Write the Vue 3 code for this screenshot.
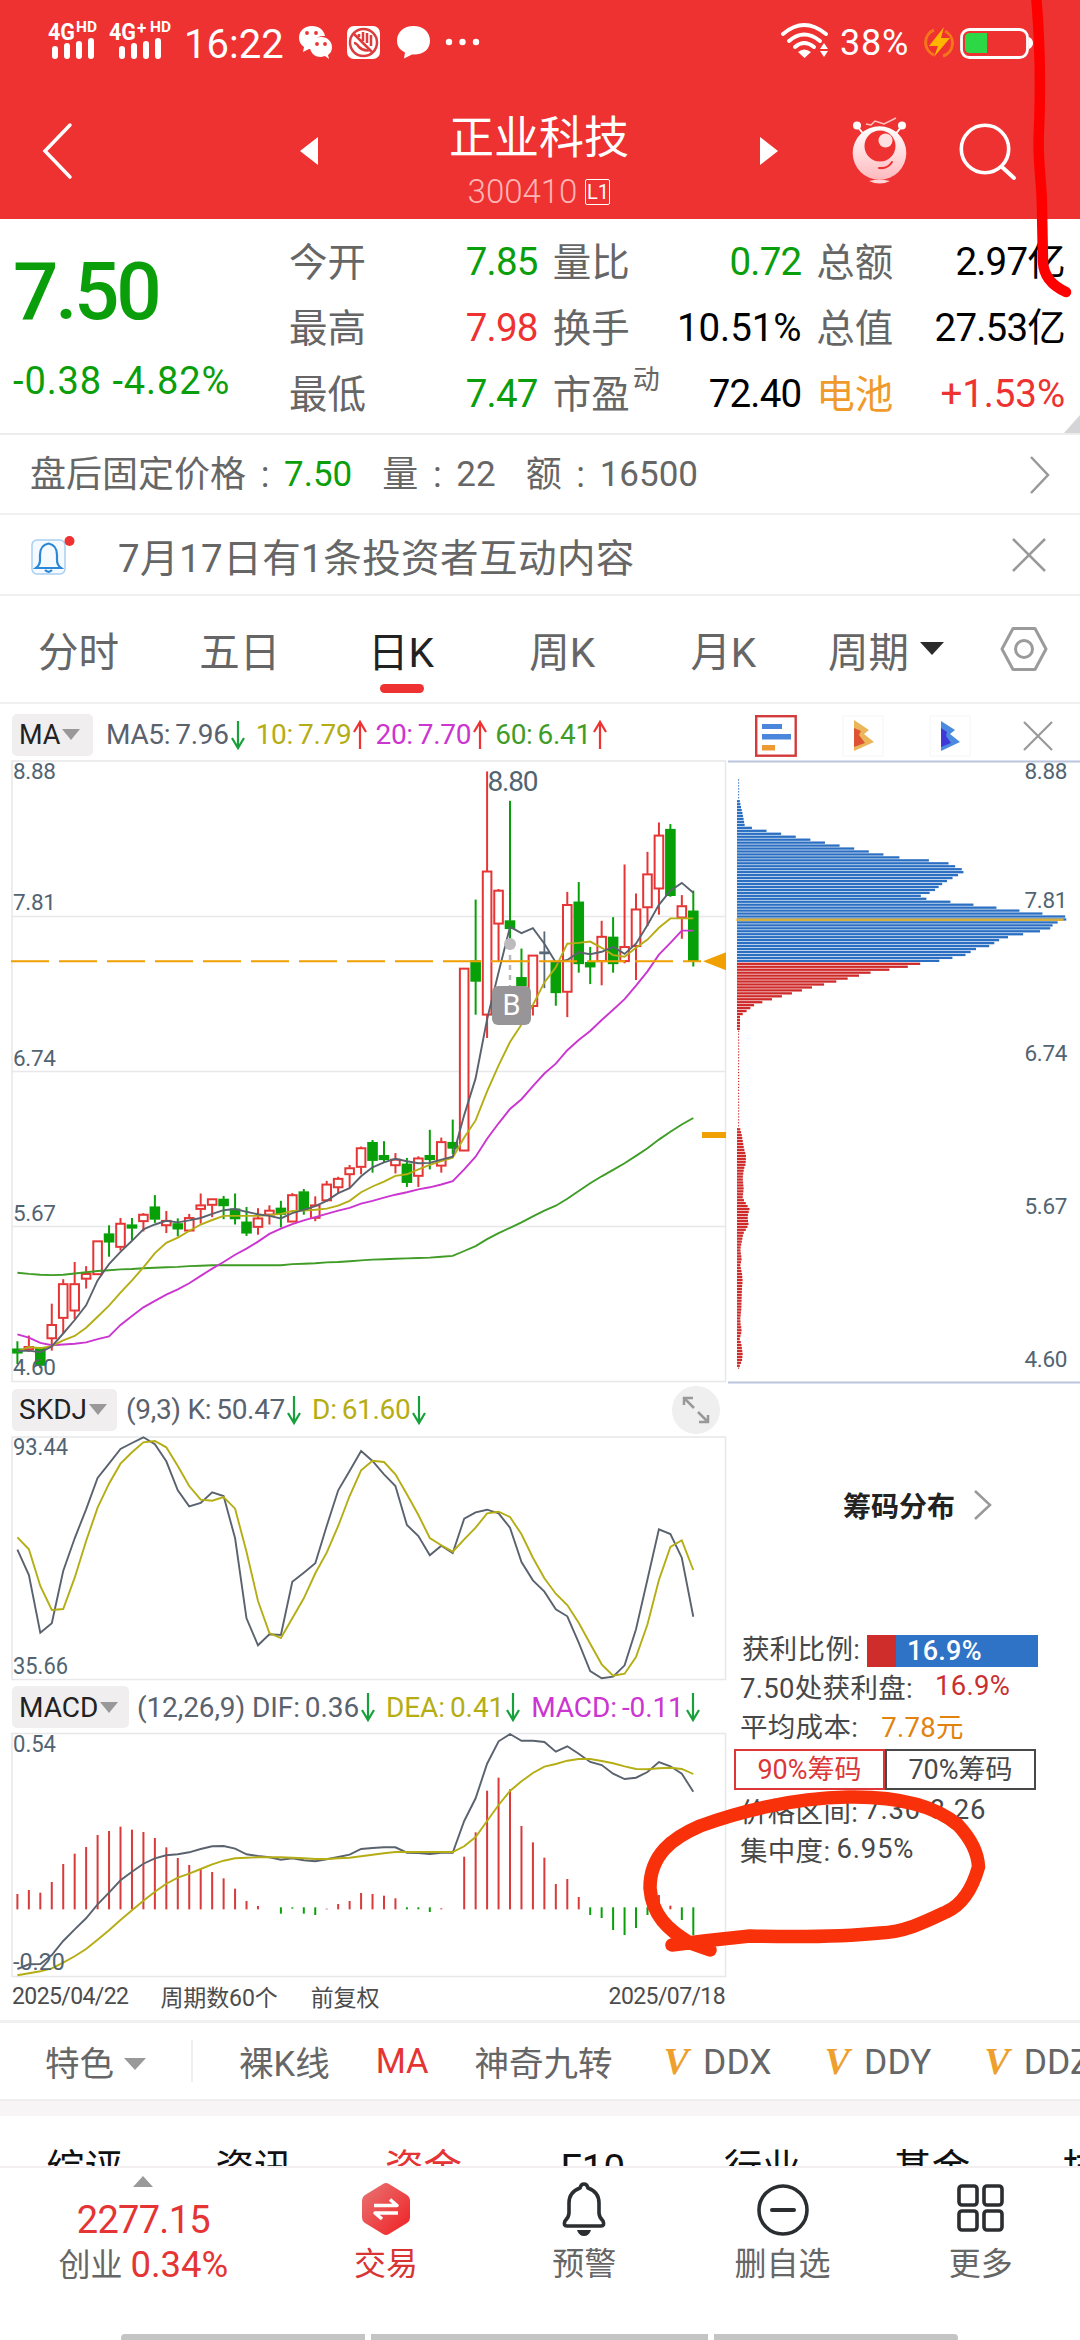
<script setup>
import { ref } from 'vue';

const quotes = ref([
  { label: '今开', value: '7.85', tone: 'down' },
  { label: '量比', value: '0.72', tone: 'down' },
  { label: '总额', value: '2.97亿', tone: 'plain' },
  { label: '最高', value: '7.98', tone: 'up' },
  { label: '换手', value: '10.51%', tone: 'plain' },
  { label: '总值', value: '27.53亿', tone: 'plain' },
  { label: '最低', value: '7.47', tone: 'down' },
  { label: '市盈', value: '72.40', tone: 'plain', sup: '动' },
  { label: '电池', value: '+1.53%', tone: 'up', sector: true }
]);

const periods = ['分时', '五日', '日K', '周K', '月K'];
const period = ref('日K');

const sections = ['综评', '资讯', '资金', 'F10', '行业', '基金', '技术'];
const section = ref('资金');

const axis = ['8.88', '7.81', '6.74', '5.67', '4.60'];

// one slot per trading day
const cx = (i) => 17.4 + i * 11.456;
const py = (v) => v / 2.45;

// [rising, high, body top, body bottom, low]
const rows = [
  [0, 1424, 1443, 1453, 1480], [1, 1410, 1437, 1445, 1450], [0, 1440, 1440, 1483, 1490],
  [1, 1332, 1383, 1418, 1447], [1, 1272, 1283, 1368, 1405], [1, 1230, 1283, 1350, 1370],
  [1, 1240, 1258, 1272, 1295], [1, 1178, 1178, 1261, 1261], [0, 1140, 1161, 1181, 1217],
  [1, 1122, 1135, 1194, 1202], [0, 1122, 1139, 1147, 1177], [1, 1110, 1113, 1131, 1155],
  [0, 1066, 1095, 1125, 1134], [1, 1105, 1128, 1141, 1159], [0, 1123, 1136, 1149, 1167],
  [1, 1112, 1121, 1154, 1156], [1, 1062, 1090, 1101, 1136], [1, 1075, 1075, 1091, 1120],
  [0, 1068, 1076, 1092, 1125], [0, 1062, 1100, 1124, 1138], [0, 1095, 1132, 1159, 1166],
  [1, 1098, 1122, 1145, 1163], [1, 1091, 1103, 1115, 1138], [0, 1080, 1098, 1113, 1145],
  [1, 1061, 1065, 1132, 1132], [0, 1051, 1058, 1103, 1114], [1, 1069, 1090, 1123, 1130],
  [1, 1031, 1039, 1080, 1082], [1, 1021, 1025, 1048, 1062], [1, 992, 999, 1016, 1048],
  [1, 947, 950, 998, 1015], [0, 931, 937, 981, 1011], [0, 934, 969, 979, 985],
  [1, 963, 978, 994, 1013], [0, 975, 990, 1035, 1046], [1, 971, 975, 1020, 1046],
  [0, 906, 969, 979, 1003], [1, 925, 935, 995, 1011], [0, 881, 937, 951, 965],
  [1, 510, 510, 958, 958], [0, 342, 492, 542, 624], [1, 28, 272, 625, 681],
  [1, 316, 319, 402, 495], [0, 100, 394, 413, 440], [0, 462, 533, 553, 560],
  [1, 478, 478, 604, 626], [2, 420, 470, 473, 559], [0, 493, 493, 570, 602],
  [1, 323, 354, 569, 630], [0, 299, 348, 499, 521], [0, 458, 496, 507, 549],
  [1, 394, 432, 494, 552], [0, 385, 434, 499, 521], [1, 256, 457, 494, 498],
  [1, 327, 365, 457, 539], [1, 225, 279, 362, 407], [1, 153, 184, 316, 379],
  [0, 157, 170, 332, 335], [1, 331, 357, 387, 438], [0, 320, 370, 492, 506]
];
const kinds = ['fall', 'rise', 'flat'];
const candles = rows.map(([k, h, t, b, l], i) => ({
  kind: kinds[k], x: cx(i), h: py(h), t: py(t), b: py(b), l: py(l)
}));

const line = (values, y) => values.map((v, i) => `${cx(i).toFixed(1)},${y(v).toFixed(1)}`).join(' ');

const ma5 = line([
  1448, 1447, 1451, 1437, 1405, 1372, 1336, 1275, 1235, 1205, 1178, 1150, 1138, 1129, 1133, 1128, 1122, 1112, 1103, 1100,
  1107, 1113, 1117, 1123, 1110, 1102, 1093, 1080, 1061, 1049, 1020, 998, 986, 977, 983, 988, 987, 979, 972, 870,
  780, 635, 520, 409, 424, 412, 450, 496, 490, 471, 476, 470, 458, 475, 450, 404, 355, 320, 301, 325
], py);
const ma10 = line([
  1449, 1438, 1441, 1436, 1422, 1411, 1391, 1364, 1337, 1305, 1275, 1243, 1208, 1183, 1170, 1154, 1138, 1127, 1117, 1117,
  1117, 1117, 1115, 1112, 1105, 1104, 1102, 1099, 1092, 1080, 1059, 1045, 1033, 1019, 1015, 1003, 992, 983, 974, 925,
  883, 812, 748, 691, 648, 600, 545, 508, 450, 448, 445, 460, 478, 482, 460, 440, 411, 388, 388, 388
], py);
const ma20 = line([
  1407, 1415, 1428, 1434, 1432, 1430, 1427, 1419, 1412, 1384, 1362, 1341, 1325, 1310, 1297, 1282, 1264, 1246, 1230, 1212,
  1197, 1180, 1161, 1148, 1137, 1128, 1120, 1112, 1104, 1097, 1087, 1080, 1072, 1065, 1059, 1052, 1047, 1040, 1032, 1003,
  972, 928, 890, 855, 831, 799, 768, 744, 711, 686, 664, 637, 612, 586, 553, 518, 477, 448, 418, 418
], py);
const ma60 = line([
  1256, 1259, 1261, 1262, 1261, 1258, 1255, 1252, 1250, 1248, 1247, 1245, 1244, 1243, 1242, 1240, 1239, 1238, 1238, 1238,
  1238, 1238, 1238, 1238, 1235, 1234, 1233, 1231, 1230, 1228, 1226, 1224, 1223, 1222, 1221, 1220, 1219, 1217, 1215, 1203,
  1191, 1174, 1159, 1146, 1133, 1118, 1104, 1092, 1075, 1056, 1037, 1020, 1004, 988, 970, 951, 930, 911, 893, 877
], py);

const third = (v) => v / 3;
const k = line([
  506, 582, 755, 727, 570, 472, 385, 291, 248, 204, 186, 169, 190, 241, 328, 376, 366, 334, 345, 472,
  712, 793, 760, 762, 602, 575, 547, 435, 328, 270, 210, 240, 280, 315, 432, 465, 523, 494, 516, 413,
  394, 386, 397, 440, 543, 598, 632, 685, 706, 785, 870, 892, 887, 853, 745, 595, 445, 459, 530, 707
], third);
const d = line([
  469, 505, 615, 687, 684, 590, 480, 380, 308, 248, 214, 184, 180, 199, 255, 315, 356, 359, 348, 383,
  512, 660, 756, 771, 712, 652, 577, 515, 435, 345, 268, 239, 243, 280, 340, 402, 471, 493, 512, 475,
  440, 397, 392, 408, 460, 530, 592, 638, 672, 725, 788, 850, 884, 878, 828, 730, 597, 498, 478, 567
], third);
const dif = line([
  864, 850, 849, 822, 780, 745, 712, 670, 635, 598, 572, 548, 532, 523, 520, 514, 504, 496, 495, 503,
  520, 525, 529, 536, 532, 538, 541, 535, 528, 521, 504, 501, 499, 499, 515, 516, 519, 515, 515, 420,
  352, 248, 181, 159, 179, 179, 183, 212, 196, 218, 243, 252, 278, 294, 290, 273, 243, 256, 278, 332
], third);
const dea = line([
  883, 877, 871, 862, 845, 826, 804, 776, 748, 717, 688, 659, 632, 608, 590, 578, 564, 550, 539, 532,
  530, 529, 529, 529, 530, 532, 534, 534, 532, 530, 526, 521, 517, 513, 513, 513, 513, 513, 513, 496,
  468, 420, 372, 330, 301, 276, 257, 249, 239, 234, 234, 240, 247, 256, 264, 265, 262, 260, 264, 279
], third);

// positive days rise from the zero line, negative days hang below it
const macd = [
  46, 58, 50, 82, 136, 167, 187, 223, 235, 248, 239, 232, 214, 186, 154, 133, 123, 112, 93, 62,
  25, 10, 0, -19, -4, -19, -23, 2, 16, 25, 49, 46, 41, 33, -6, -6, -14, 3, 0, 158,
  231, 356, 395, 360, 250, 201, 155, 76, 91, 37, -23, -32, -68, -83, -62, -23, 43, 11, -38, -84
].map((v, i) => ({
  x: cx(i) - 1, up: v > 0, y: v > 0 ? (685 - v) / 3 : 679 / 3, h: Math.abs(v) / 3
}));

// chip distribution outline: [y, bar end]
const outline = [
  [173, 117], [215, 118], [232, 122], [250, 128], [275, 134], [281, 153], [347, 590], [358, 737], [378, 797],
  [385, 780], [405, 730], [425, 698], [432, 667], [438, 651], [442, 700], [475, 1044], [482, 1116], [489, 1090],
  [496, 1062], [510, 1047], [516, 995], [529, 906], [546, 869], [553, 827], [566, 797], [580, 714], [586, 660],
  [593, 621], [606, 510], [627, 402], [638, 340], [664, 222], [677, 165], [697, 131], [703, 120], [730, 120],
  [740, 117], [950, 117], [957, 121], [968, 125], [1000, 132], [1015, 138], [1035, 137], [1045, 132], [1065, 128],
  [1090, 131], [1110, 128], [1117, 133], [1137, 150], [1145, 144], [1158, 143], [1170, 146], [1180, 139],
  [1190, 130], [1210, 125], [1225, 121], [1247, 125], [1262, 121], [1280, 126], [1297, 128], [1310, 126],
  [1360, 124], [1380, 121], [1395, 122], [1405, 125], [1418, 123], [1424, 118], [1437, 124], [1460, 128],
  [1475, 126], [1485, 120], [1497, 116]
];
const chips = [];
for (let y = 175.5; y < 1497; y += 6.62) {
  const n = outline.findIndex((p) => p[0] >= y);
  const [y0, x0] = outline[n - 1];
  const [y1, x1] = outline[n];
  const end = x0 + ((x1 - x0) * (y - y0)) / (y1 - y0);
  const thin = end < 119;
  chips.push({
    x: thin ? 10 : 9,
    y: (y - 132) / 2.24,
    w: thin ? 1.2 : (end - 111) / 3,
    h: thin ? 1.2 : 2.3,
    win: y > 584
  });
}
</script>

<template>
  <div class="page">
    <header class="top">
      <div class="status">
        <svg class="signal" width="124" height="40" viewBox="0 0 124 40">
          <g class="net">
            <text x="0" y="17.500" font-size="24" textLength="27" lengthAdjust="spacingAndGlyphs">4G</text>
            <text x="28" y="10" font-size="14" textLength="21" lengthAdjust="spacingAndGlyphs">HD</text>
            <text x="61" y="17.500" font-size="24" textLength="27" lengthAdjust="spacingAndGlyphs">4G</text>
            <text x="89" y="12" font-size="17">+</text>
            <text x="102" y="10" font-size="14" textLength="21" lengthAdjust="spacingAndGlyphs">HD</text>
          </g>
          <path d="M7 27v7M19 24v10M31 22v12M43 19v15M74 27v7M86 24v10M98 22v12M110 19v15" stroke="#fff" stroke-width="6" stroke-linecap="round" />
        </svg>
        <span class="clock">16:22</span>
        <svg class="apps" width="190" height="36" viewBox="0 0 190 36">
          <path d="M14 1C6 1 1 6 1 13c0 4 2 7 5 9l-1 5 6-3h4c-2-8 4-14 12-13C26 5 21 1 14 1Z" fill="#fff" />
          <path d="M23 12c-7 0-11 5-11 10s4 10 11 10l4-1 4 3-1-4c3-2 4-5 4-8 0-5-4-10-11-10Z" fill="#fff" />
          <g fill="#ee3131"><circle cx="9" cy="8" r="1.9" /><circle cx="18" cy="8" r="1.9" /><circle cx="19" cy="19" r="1.9" /><circle cx="27" cy="19" r="1.9" /></g>
          <rect x="49" y="1" width="33" height="33" rx="7" fill="#fff" />
          <circle cx="65.500" cy="17.500" r="13.500" fill="none" stroke="#dc3c3c" stroke-width="2.500" />
          <path d="M56 9l18 18M61 12V9M65 16V7M69 18V8M73 21V10M56 18c2 0 3 1 5 4 3 3 7 4 11 3" fill="none" stroke="#dc3c3c" stroke-width="2.500" />
          <path d="M115.500 1C106 1 99 7 99 15.500c0 5 2 9 8 12l-1 6 8-4c11 1 18-5 18-14C132 7 125 1 115.500 1Z" fill="#fff" />
          <circle cx="151" cy="17" r="3.200" fill="#fff" /><circle cx="164.500" cy="17" r="3.200" fill="#fff" /><circle cx="178" cy="17" r="3.200" fill="#fff" />
        </svg>
        <svg class="wifi" width="48" height="36" viewBox="0 0 48 36">
          <path d="M2 11Q23-7 45 11M8 18Q23 5 39 18M14 24Q23 16 33 24" fill="none" stroke="#fff" stroke-width="4" stroke-linecap="round" />
          <path d="M17 29q6-5 13 0l-6.500 6ZM39 26l4-6 4 6ZM39 28l4 6 4-6Z" fill="#fff" />
        </svg>
        <span class="percent">38%</span>
        <svg class="battery" width="110" height="32" viewBox="0 0 110 32">
          <path d="M10 3A13.500 13.500 0 0 0 10 28M21 4A13.500 13.500 0 0 1 19 29" fill="none" stroke="#f5761a" stroke-width="3" />
          <path d="M20 0L5 19h9l-4 11 16-19h-9Z" fill="#ffb400" />
          <rect x="37.500" y="2.500" width="66" height="28" rx="8" fill="none" stroke="#fff" stroke-width="2.800" />
          <path d="M46 6h17v20H46q-5 0-5-5V11q0-5 5-5Z" fill="#2cd845" />
          <path d="M105 10q4 2 4 6t-4 6Z" fill="#fff" />
        </svg>
      </div>
      <nav class="nav">
        <svg class="back" width="32" height="60" viewBox="0 0 32 60"><path d="M28 4L3 30l25 26" fill="none" stroke="#fff" stroke-width="3.500" stroke-linecap="round" /></svg>
        <svg class="prev" width="18" height="28" viewBox="0 0 18 28"><path d="M18 0v28L0 14Z" fill="#fff" /></svg>
        <div class="title">
          <h1>正业科技</h1>
          <p>300410<b>L1</b></p>
        </div>
        <svg class="next" width="18" height="28" viewBox="0 0 18 28"><path d="M0 0v28l18-14Z" fill="#fff" /></svg>
        <svg class="robot" width="56" height="70" viewBox="0 0 56 70">
          <defs>
            <linearGradient id="skin" x1="0" y1="0" x2="0" y2="1"><stop offset="0" stop-color="#fff" /><stop offset="1" stop-color="#ffb9bd" /></linearGradient>
          </defs>
          <path d="M5 9l8 10M50 9l-8 10" stroke="#fff" stroke-width="2" />
          <circle cx="5" cy="8.500" r="4" fill="#fff" /><circle cx="50" cy="8.500" r="4" fill="#fff" />
          <path d="M14 7l5 1 4-4 9 3 12-6" fill="none" stroke="#ffc4c4" stroke-width="1.500" />
          <circle cx="27.500" cy="36" r="26.800" fill="url(#skin)" />
          <circle cx="28" cy="29" r="15.500" fill="#ee3131" />
          <circle cx="33.500" cy="23.500" r="7" fill="#ffe0e0" />
          <path d="M27 51q9 1 13-6" fill="none" stroke="#ee3131" stroke-width="2" stroke-linecap="round" />
          <path d="M17 64q10-3 21 0-10 5-21 0Z" fill="#ffd6d8" />
        </svg>
        <svg class="search" width="58" height="58" viewBox="0 0 58 58"><circle cx="26" cy="26" r="23.700" fill="none" stroke="#fff" stroke-width="3.600" /><path d="M43 44l12 11" stroke="#fff" stroke-width="4" stroke-linecap="round" /></svg>
      </nav>
    </header>

    <section class="quote">
      <div class="price">
        <strong>7.50</strong>
        <span>-0.38 -4.82%</span>
      </div>
      <dl class="stats">
        <div v-for="q in quotes" :key="q.label">
          <dt :class="{ sector: q.sector }">{{ q.label }}<sup v-if="q.sup">{{ q.sup }}</sup></dt>
          <dd :class="[q.tone, { rate: q.value.endsWith('%') }]">{{ q.value }}</dd>
        </div>
      </dl>
      <i class="corner"></i>
    </section>

    <section class="after">
      <span>盘后固定价格</span><i>:</i><em class="down">7.50</em>
      <span class="more">量</span><i>:</i><em>22</em>
      <span class="more">额</span><i>:</i><em>16500</em>
      <svg width="22" height="40" viewBox="0 0 22 40"><path d="M2 2l17 18L2 38" fill="none" stroke="#999" stroke-width="2.500" /></svg>
    </section>

    <section class="notice">
      <svg width="46" height="44" viewBox="0 0 46 44">
        <rect x="1" y="7" width="33" height="34" rx="5" fill="#f4faff" stroke="#a9cff0" stroke-width="1.500" />
        <path d="M5 35q4-3 4-8v-5q0-10 8.500-11.500Q26 12 26 22v5q0 5 4 8ZM14 37q3.500 3.500 7 0" fill="none" stroke="#2c87d6" stroke-width="2.200" />
        <circle cx="38.500" cy="8" r="5" fill="#ee3131" />
      </svg>
      <span>7月17日有1条投资者互动内容</span>
      <svg class="close" width="36" height="36" viewBox="0 0 36 36"><path d="M2 2l32 32M34 2L2 34" stroke="#999" stroke-width="2.500" /></svg>
    </section>

    <section class="periods">
      <a v-for="p in periods" :key="p" :class="{ active: p === period }" @click="period = p">{{ p }}</a>
      <a class="cycle">周期<svg width="24" height="14" viewBox="0 0 24 14"><path d="M0 0h24L12 13Z" fill="#2b2b2b" /></svg></a>
      <svg class="gear" width="48" height="46" viewBox="0 0 48 46"><path d="M13 2.500h22L46 23 35 43.500H13L2 23Z" fill="none" stroke="#9b9b9b" stroke-width="3" stroke-linejoin="round" /><circle cx="24" cy="23" r="8.500" fill="none" stroke="#9b9b9b" stroke-width="3" /></svg>
    </section>

    <main class="charts">
      <div class="left">
        <div class="bar">
          <button>MA<i></i></button>
          <span class="slate">MA5:<b>7.96</b></span><svg class="arrow drop" viewBox="0 0 14 30"><path d="M7 1v27M1 18l6 10 6-10" /></svg>
          <span class="olive">10:<b>7.79</b></span><svg class="arrow" viewBox="0 0 14 30"><path d="M7 29V2M1 12L7 2l6 10" /></svg>
          <span class="violet">20:<b>7.70</b></span><svg class="arrow" viewBox="0 0 14 30"><path d="M7 29V2M1 12L7 2l6 10" /></svg>
          <span class="leaf">60:<b>6.41</b></span><svg class="arrow" viewBox="0 0 14 30"><path d="M7 29V2M1 12L7 2l6 10" /></svg>
        </div>
        <svg class="candles" width="728" height="624" viewBox="0 0 728 624">
          <rect x="12" y="1" width="713.500" height="620.500" class="frame" />
          <path d="M12 156.500h713M12 311.500h713M12 466.500h713" class="frame" />
          <g v-for="(c, i) in candles" :key="i" :class="c.kind">
            <line :x1="c.x" :x2="c.x" :y1="c.h" :y2="c.t" />
            <line :x1="c.x" :x2="c.x" :y1="c.b" :y2="c.l" />
            <rect :x="c.x - 4.300" :y="c.t + 0.500" width="8.600" :height="Math.max(c.b - c.t - 1, 1)" />
          </g>
          <polyline :points="ma60" stroke="#3f9c26" />
          <polyline :points="ma20" stroke="#cb35d0" />
          <polyline :points="ma10" stroke="#b5ad14" />
          <polyline :points="ma5" stroke="#5a626e" />
          <path d="M11 201.300h690" stroke="#f0a000" stroke-width="2" stroke-dasharray="38 10" />
          <path d="M703 201.300l23-9v18ZM702 372h24v6h-24Z" fill="#f0a000" />
          <path d="M510 185v44" stroke="#b9b7ba" stroke-width="2.500" stroke-dasharray="5 5" />
          <circle cx="510" cy="184" r="6" fill="#bdbbbe" />
          <rect x="492" y="226" width="39" height="39" rx="6" fill="#979598" />
          <text x="511.500" y="255" class="buy">B</text>
          <text x="487.500" y="31" class="label peak" textLength="51">8.80</text>
          <text v-for="(a, i) in axis" :key="a" x="13" :y="[19, 150, 306, 460.500, 615][i]" class="label" textLength="43">{{ a }}</text>
        </svg>
        <div class="bar skdj">
          <button>SKDJ<i></i></button>
          <span class="slate">(9,3) K:<b>50.47</b></span><svg class="arrow drop" viewBox="0 0 14 30"><path d="M7 1v27M1 18l6 10 6-10" /></svg>
          <span class="olive">D:<b>61.60</b></span><svg class="arrow drop" viewBox="0 0 14 30"><path d="M7 1v27M1 18l6 10 6-10" /></svg>
          <svg class="expand" width="48" height="48" viewBox="0 0 48 48"><circle cx="24" cy="24" r="24" fill="#efefef" /><path d="M12 19v-7h9M12 12l10 10M36 29v7h-9M36 36L26 26" fill="none" stroke="#999" stroke-width="2.500" /></svg>
        </div>
        <svg class="plot" width="728" height="250" viewBox="0 52 728 250">
          <rect x="12" y="56" width="713.500" height="242.500" class="frame" />
          <polyline :points="k" stroke="#5a626e" />
          <polyline :points="d" stroke="#b5ad14" />
          <text x="13" y="73.500" class="label small" textLength="55" lengthAdjust="spacingAndGlyphs">93.44</text>
          <text x="13" y="292.500" class="label small" textLength="55" lengthAdjust="spacingAndGlyphs">35.66</text>
        </svg>
        <div class="bar macd">
          <button>MACD<i></i></button>
          <span class="slate">(12,26,9) DIF:<b>0.36</b></span><svg class="arrow drop" viewBox="0 0 14 30"><path d="M7 1v27M1 18l6 10 6-10" /></svg>
          <span class="olive">DEA:<b>0.41</b></span><svg class="arrow drop" viewBox="0 0 14 30"><path d="M7 1v27M1 18l6 10 6-10" /></svg>
          <span class="violet">MACD:<b>-0.11</b></span><svg class="arrow drop" viewBox="0 0 14 30"><path d="M7 1v27M1 18l6 10 6-10" /></svg>
        </div>
        <svg class="plot" width="728" height="250" viewBox="0 50 728 250">
          <rect x="12" y="52.500" width="713.500" height="243" class="frame" />
          <rect v-for="(m, i) in macd" :key="i" :x="m.x" :y="m.y" width="2" :height="m.h" :fill="m.up ? '#d93a3a' : '#0ba00b'" />
          <polyline :points="dif" stroke="#5a626e" />
          <polyline :points="dea" stroke="#b5ad14" />
          <text x="13" y="70.500" class="label small" textLength="43" lengthAdjust="spacingAndGlyphs">0.54</text>
          <text x="13" y="289" class="label small" textLength="52" lengthAdjust="spacingAndGlyphs">-0.20</text>
        </svg>
        <div class="dates">
          <span>2025/04/22</span><span class="count">周期数60个</span><span class="adjust">前复权</span><span class="last">2025/07/18</span>
        </div>
      </div>

      <aside class="right">
        <div class="tools">
          <svg class="picked" width="42" height="42" viewBox="0 0 42 42"><rect x="1.200" y="1.200" width="39.500" height="39.500" fill="#fff" stroke="#d33a3a" stroke-width="2.400" /><path d="M7 9h20v5H7ZM7 19h29v5.500H7Z" fill="#4a86dc" /><path d="M7 30h13v5.500H7Z" fill="#ee9a32" /></svg>
          <svg width="42" height="42" viewBox="0 0 42 42"><rect x="1" y="1" width="40" height="40" fill="#fff" stroke="#f5f5f5" /><path d="M12 5l15 10-5 4 10 8-20 9Z" fill="#ebb659" /><path d="M12 13l7 3-2 4 6 8-11 4Z" fill="#dc5433" /></svg>
          <svg width="42" height="42" viewBox="0 0 42 42"><rect x="1" y="1" width="40" height="40" fill="#fff" stroke="#f5f5f5" /><path d="M12 6l14 9-5 4 10 8-19 9Z" fill="#4a8ae0" /><path d="M12 13l6 4-1 4 5 7-10 4Z" fill="#4138d8" /></svg>
          <svg class="shut" width="30" height="30" viewBox="0 0 30 30"><path d="M1 1l28 28M29 1L1 29" stroke="#999" stroke-width="2.200" /></svg>
        </div>
        <svg class="chips" width="352" height="624" viewBox="0 0 352 624">
          <path d="M0 1.500h352M0 622.500h352" stroke="#bcc7de" stroke-width="2" />
          <rect v-for="(c, i) in chips" :key="i" :x="c.x" :y="c.y" :width="c.w" :height="c.h" :fill="c.win ? '#cf2a2a' : '#2b6fc2'" />
          <rect x="8.500" y="158.500" width="327" height="2.500" fill="#d6ae3c" />
          <text v-for="(a, i) in axis" :key="a" x="296.500" :y="[19, 148, 301, 454, 607][i]" class="label" textLength="43">{{ a }}</text>
        </svg>
        <h2>筹码分布<svg width="20" height="32" viewBox="0 0 20 32"><path d="M2 2l15 14L2 30" fill="none" stroke="#999" stroke-width="2.500" /></svg></h2>
        <div class="ratio"><span>获利比例:</span><div class="meter"><i></i><b>16.9%</b></div></div>
        <p>7.50处获利盘:<b class="win">16.9%</b></p>
        <p>平均成本:<b class="cost">7.78元</b></p>
        <div class="switch"><button class="on">90%筹码</button><button>70%筹码</button></div>
        <p class="range">价格区间:<b>7.30-8.26</b></p>
        <p>集中度:<b>6.95%</b></p>
      </aside>
    </main>

    <section class="special">
      <span class="group">特色<i></i></span>
      <span class="bare">裸K线</span>
      <span class="ma">MA</span>
      <span class="nine">神奇九转</span>
      <span class="vip"><b>V</b>DDX</span>
      <span class="vip"><b>V</b>DDY</span>
      <span class="vip"><b>V</b>DDZ</span>
    </section>

    <section class="sections">
      <a v-for="s in sections" :key="s" :class="{ active: s === section }" @click="section = s">{{ s }}</a>
    </section>

    <footer class="dock">
      <div class="index">
        <i></i>
        <strong>2277.15</strong>
        <span>创业 <b>0.34%</b></span>
      </div>
      <a class="trade">
        <svg width="50" height="56" viewBox="0 0 50 56">
          <defs><linearGradient id="hex" x1="0" y1="0" x2="1" y2="1"><stop offset="0" stop-color="#e87575" /><stop offset="1" stop-color="#f01f22" /></linearGradient></defs>
          <path d="M22 3q3-2 6 0l18 11q3 2 3 5v18q0 3-3 5L28 53q-3 2-6 0L4 42q-3-2-3-5V19q0-3 3-5Z" fill="url(#hex)" />
          <path d="M13 24.500h23l-7-6M37 32H14l7 6" fill="none" stroke="#fff" stroke-width="3.500" stroke-linejoin="round" />
        </svg>交易
      </a>
      <a>
        <svg width="50" height="56" viewBox="0 0 50 56"><path d="M25 3q3 0 4 4 11 4 11 15v10q0 4 4 8 2 5-2 5H8q-4 0-2-5 4-4 4-8V22Q10 11 21 7q1-4 4-4Z" fill="none" stroke="#2b2e31" stroke-width="3.600" /><path d="M18 49h14q-2 6-7 6t-7-6Z" fill="#2b2e31" /></svg>预警
      </a>
      <a>
        <svg width="54" height="56" viewBox="0 0 54 56"><circle cx="27" cy="29" r="24" fill="none" stroke="#2b2e31" stroke-width="3.600" /><path d="M16 29h22" stroke="#2b2e31" stroke-width="4" stroke-linecap="round" /></svg>删自选
      </a>
      <a>
        <svg width="50" height="56" viewBox="0 0 50 56"><g fill="none" stroke="#2b2e31" stroke-width="3.600"><rect x="3" y="5" width="18" height="19" rx="3" /><rect x="28" y="5" width="18" height="19" rx="3" /><rect x="3" y="30" width="18" height="19" rx="3" /><rect x="28" y="30" width="18" height="19" rx="3" /></g></svg>更多
      </a>
    </footer>
    <div class="home"><i></i><i></i><i></i></div>

    <!-- pen marks drawn over the page -->
    <svg class="ink" width="1080" height="2340" viewBox="0 0 1080 2340">
      <path d="M1036-6C1040 40 1041 80 1039 130C1037 160 1042 180 1042 210L1043 262Q1044 282 1066 292" stroke="#ff0000" stroke-width="10.500" />
      <path d="M710 1950L690 1943C668 1930 652 1915 650 1888C650 1855 672 1838 700 1826C735 1813 790 1798 848 1797C910 1796 940 1810 958 1825C972 1840 978 1855 978.500 1867C972 1890 962 1905 946 1912C925 1922 905 1932 880 1933C840 1937 790 1937 750 1936Q710 1940 672 1945Q690 1940 708 1948" stroke="#f8310a" stroke-width="13.500" />
    </svg>
  </div>
</template>

<style>
body {
  margin: 0;
  background: #fff;
}
</style>

<style scoped>
.page {
  position: relative;
  width: 1080px;
  height: 2340px;
  overflow: hidden;
  display: flex;
  flex-direction: column;
  background: #fff;
  color: #666;
  font-family: Roboto, "Noto Sans CJK SC", sans-serif;
}

.page > * {
  box-sizing: border-box;
  flex-shrink: 0;
}

svg {
  display: block;
  flex-shrink: 0;
  overflow: visible;
}

h1,
h2,
p,
dl,
dd {
  margin: 0;
  font-weight: 400;
}

i,
em {
  font-style: normal;
}

.down {
  color: #0a9e0a;
}

.up {
  color: #ee3131;
}

.plain {
  color: #000;
}

.top {
  height: 219px;
  background: #ee3131;
  color: #fff;
}

.status {
  height: 80px;
  display: flex;
  align-items: flex-start;
  padding: 22px 0 0 48px;
  box-sizing: border-box;
}

.net text {
  fill: #fff;
  font-weight: 700;
}

.clock {
  margin-left: 12px;
  font-size: 40px;
  line-height: 46px;
  width: 114px;
}

.apps {
  margin: 3px 293px 0 0;
}

.wifi {
  margin: 1px 11px 0 0;
}

.percent {
  font-size: 36px;
  line-height: 42px;
  width: 84px;
  letter-spacing: 0.8px;
}

.battery {
  margin-top: 5px;
}

.nav {
  height: 139px;
  display: flex;
  align-items: flex-start;
  padding-left: 42px;
}

.back {
  margin-top: 41px;
}

.prev {
  margin: 57px 0 0 226px;
}

.title {
  width: 442px;
  text-align: center;
}

.title h1 {
  margin-top: 33px;
  font-size: 45px;
  line-height: 52px;
}

.title p {
  display: flex;
  justify-content: center;
  align-items: center;
  gap: 8px;
  font-size: 33px;
  font-weight: 300;
  line-height: 36px;
  margin-top: 9px;
  color: #ffb5b5;
}

.title p b {
  width: 23px;
  height: 24px;
  border: 1.5px solid #fff;
  border-radius: 2px;
  font-size: 20px;
  line-height: 24px;
  font-weight: 400;
  color: #fff;
}

.next {
  margin-top: 57px;
}

.robot {
  margin: 37px 0 0 74px;
}

.search {
  margin: 43px 0 0 51px;
}

.quote {
  position: relative;
  height: 216px;
  display: flex;
  border-bottom: 2px solid #ececec;
}

.price {
  width: 289px;
  padding-left: 13px;
  box-sizing: border-box;
  color: #0a9e0a;
}

.price strong {
  display: block;
  margin-top: 26px;
  font-size: 80px;
  line-height: 94px;
  font-weight: 500;
  letter-spacing: -3.3px;
}

.price span {
  display: block;
  margin-top: 19px;
  font-size: 38px;
  line-height: 46px;
  letter-spacing: 0.9px;
}

.stats {
  width: 776px;
  height: 198px;
  margin-top: 11px;
  display: grid;
  grid-template-columns: repeat(3, 1fr);
  grid-template-rows: repeat(3, 66px);
  column-gap: 15px;
}

.stats div {
  display: flex;
  justify-content: space-between;
  align-items: center;
}

.stats dt {
  display: flex;
  font-size: 38.5px;
  line-height: 60px;
}

.stats sup {
  font-size: 27px;
  line-height: 30px;
  margin-left: 3px;
}

.stats dd {
  font-size: 38.5px;
  line-height: 60px;
  letter-spacing: -0.8px;
  padding-bottom: 3px;
}

.stats .rate {
  letter-spacing: -0.1px;
}

.stats dt.sector {
  color: #f09a2c;
}

.corner {
  position: absolute;
  right: 0;
  bottom: 0;
  border-left: 16px solid transparent;
  border-bottom: 18px solid #d5d5d8;
}

.after {
  height: 80px;
  display: flex;
  align-items: center;
  padding-left: 30px;
  padding-top: 2px;
  border-bottom: 2px solid #f0f0f0;
  font-size: 36px;
  line-height: 50px;
}

.after i {
  width: 38px;
  text-align: center;
}

.after em {
  font-size: 35px;
}

.after .more {
  margin-left: 30px;
}

.after svg {
  margin-left: auto;
  margin-right: 29px;
}

.notice {
  height: 81px;
  display: flex;
  align-items: center;
  padding-left: 31px;
  border-bottom: 2px solid #f0f0f0;
  font-size: 38.5px;
}

.notice span {
  margin-left: 41px;
  letter-spacing: 0.45px;
}

.notice .close {
  margin-left: auto;
  margin-right: 33px;
}

.periods {
  height: 108px;
  display: flex;
  align-items: center;
  border-bottom: 2px solid #f0f0f0;
  font-size: 40.5px;
}

.periods a {
  position: relative;
  left: -2px;
  width: 161.2px;
  text-align: center;
}

.periods a.active {
  color: #222;
}

.periods a.active::after {
  content: "";
  position: absolute;
  left: 60px;
  bottom: -14px;
  width: 44px;
  height: 9px;
  border-radius: 5px;
  background: #ee3131;
}

.periods .cycle {
  left: 0;
  width: 116px;
  margin-left: 22px;
  display: flex;
  align-items: center;
  gap: 11px;
}

.periods .gear {
  margin-left: 56px;
}

.charts {
  height: 1319px;
  display: flex;
  border-bottom: 3px solid #f0f0f0;
}

.left {
  width: 728px;
}

.bar {
  height: 56px;
  padding: 5px 0 0 12px;
  box-sizing: border-box;
  display: flex;
  align-items: center;
  font-size: 28px;
  white-space: nowrap;
}

.bar button {
  width: 81px;
  height: 42px;
  margin: 0 13px 0 0;
  padding: 0 0 0 7px;
  display: flex;
  align-items: center;
  gap: 2px;
  border: 0;
  border-radius: 5px;
  background: #f0eeef;
  color: #222;
  font: 27px Roboto, sans-serif;
}

.bar button i {
  border: 9.5px solid transparent;
  border-top: 11px solid #999;
  border-bottom: 0;
}

.bar b {
  font-weight: 400;
  margin-left: 5px;
}

.bar span {
  letter-spacing: -0.3px;
}

.arrow {
  width: 14px;
  height: 30px;
  margin: 0 8px 0 2px;
  fill: none;
  stroke: #ee3131;
  stroke-width: 2.2;
}

.arrow.drop {
  margin-right: 11px;
  stroke: #17a03c;
}

.slate {
  color: #5a626e;
}

.olive {
  color: #b5ad14;
}

.violet {
  color: #cb35d0;
}

.leaf {
  color: #3f9c26;
}

.frame {
  fill: none;
  stroke: #e8e8ea;
  stroke-width: 1.5;
}

polyline {
  fill: none;
  stroke-width: 1.9;
}

.rise {
  stroke: #e63535;
  fill: #fff;
  stroke-width: 2;
}

.fall {
  stroke: #08a008;
  fill: #08a008;
  stroke-width: 2;
}

.flat {
  stroke: #586878;
  fill: #586878;
  stroke-width: 1.8;
}

.label {
  fill: #526472;
  font-size: 22.5px;
}

.label.peak {
  font-size: 28px;
}

.label.small {
  font-size: 24px;
}

.buy {
  fill: #fff;
  font-size: 29px;
  text-anchor: middle;
}

.bar.skdj {
  height: 49px;
  padding-top: 2px;
}

.bar.skdj button {
  width: 105px;
  margin-right: 9px;
  font-size: 28px;
}

.expand {
  margin-left: auto;
  margin-right: 8px;
}

.bar.macd {
  height: 48px;
  padding-top: 0;
}

.bar.macd button {
  width: 117px;
  margin-right: 8px;
  font-size: 28px;
}

.bar.macd span {
  letter-spacing: -0.1px;
}

.dates {
  height: 30px;
  padding: 0 3px 0 12px;
  display: flex;
  align-items: center;
  color: #4c4c4c;
  font-size: 23px;
  letter-spacing: -0.6px;
}

.dates .count {
  margin-left: 32px;
  letter-spacing: -0.1px;
}

.dates .adjust {
  margin-left: 33px;
  letter-spacing: -0.1px;
}

.dates .last {
  margin-left: auto;
}

.right {
  width: 352px;
  color: #484848;
}

.tools {
  height: 56px;
  padding: 8px 0 0 27px;
  box-sizing: border-box;
  display: flex;
  align-items: center;
  gap: 45px;
}

.tools .shut {
  margin-left: 7px;
}

.right h2 {
  height: 40px;
  margin: 101px 0 102px 115px;
  display: flex;
  align-items: center;
  gap: 18px;
  font-size: 28px;
  font-weight: 700;
  color: #222;
}

.right p,
.ratio {
  height: 39px;
  padding-left: 12px;
  display: flex;
  align-items: center;
  font-size: 27.5px;
  letter-spacing: 0.3px;
  white-space: nowrap;
}

.right b {
  font-weight: 400;
}

.ratio {
  padding-left: 14px;
}

.ratio span {
  width: 125px;
}

.meter {
  width: 171px;
  height: 32px;
  margin-top: 8px;
  display: flex;
  align-items: center;
  background: #2f73c6;
}

.meter i {
  width: 29px;
  height: 100%;
  background: #cf2c2c;
}

.meter b {
  margin-left: 11px;
  color: #fff;
  font-size: 27px;
  font-weight: 500;
}

.right .win {
  margin-left: 22px;
  color: #c9302f;
}

.right .cost {
  margin-left: 23px;
  color: #e2820f;
}

.switch {
  display: flex;
  margin: 5px 0 0 6px;
}

.switch button {
  width: 151px;
  height: 41px;
  padding: 0;
  border: 2px solid #484848;
  background: #fff;
  color: #484848;
  font: 27px/36px Roboto, "Noto Sans CJK SC", sans-serif;
}

.switch .on {
  border-color: #dd3636;
  color: #dd3636;
}

.right .range b,
.right p:last-child b {
  margin-left: 6px;
  letter-spacing: 0.8px;
}

.special {
  height: 78px;
  display: flex;
  align-items: center;
  padding-left: 45px;
  border-bottom: 2px solid #eee;
  font-size: 34.5px;
  white-space: nowrap;
}

.special span {
  flex-shrink: 0;
}

.group {
  width: 148px;
  height: 42px;
  display: flex;
  align-items: center;
  gap: 10px;
  border-right: 2px solid #f0f0f0;
  box-sizing: border-box;
}

.group i {
  margin-top: 6px;
  border: 11px solid transparent;
  border-top: 12px solid #999;
  border-bottom: 0;
}

.bare {
  margin-left: 46px;
}

.ma {
  margin-left: 46px;
  color: #e43434;
}

.nine {
  margin-left: 46px;
}

.vip {
  margin-left: 51px;
  font-size: 35.5px;
}

.vip + .vip {
  margin-left: 53px;
}

.vip b {
  display: inline-block;
  width: 39.5px;
  color: #eda02e;
  font: italic 700 38px "Liberation Serif", serif;
}

.sections {
  height: 65px;
  overflow: hidden;
  display: flex;
  border-top: 15px solid #f8f5f7;
  color: #111;
  font-size: 38.5px;
  line-height: 105px;
}

.sections a {
  width: 169.4px;
  flex-shrink: 0;
  text-align: center;
}

.sections a.active {
  color: #e43434;
}

.dock {
  height: 168px;
  border-top: 2px solid #f3eff1;
  display: flex;
  font-size: 32px;
}

.dock a {
  width: 198.5px;
  display: flex;
  flex-direction: column;
  align-items: center;
  padding-top: 13px;
  line-height: 46px;
  box-sizing: border-box;
}

.dock svg {
  margin-bottom: 4px;
}

.dock .trade {
  color: #d83434;
}

.index {
  width: 287px;
  display: flex;
  flex-direction: column;
  align-items: center;
  color: #666;
}

.index i {
  margin-top: 8px;
  border: 10px solid transparent;
  border-top: 0;
  border-bottom: 11px solid #999;
}

.index strong {
  margin-top: 11px;
  font-size: 38px;
  line-height: 44px;
  font-weight: 400;
  letter-spacing: -0.7px;
  color: #e43434;
}

.index span {
  display: flex;
  gap: 8px;
  line-height: 46px;
}

.index b {
  font-size: 36.5px;
  font-weight: 400;
  color: #e43434;
}

.home {
  display: flex;
  gap: 6px;
  height: 8px;
  margin-left: 121px;
}

.home i {
  width: 244px;
  background: #c4c4c4;
  border-radius: 4px 0 0 4px;
}

.home i:nth-child(2) {
  width: 337px;
  border-radius: 0;
}

.home i:nth-child(3) {
  border-radius: 0 4px 4px 0;
}

.ink {
  position: absolute;
  left: 0;
  top: 0;
  pointer-events: none;
  fill: none;
  stroke-linecap: round;
  stroke-linejoin: round;
}
</style>
